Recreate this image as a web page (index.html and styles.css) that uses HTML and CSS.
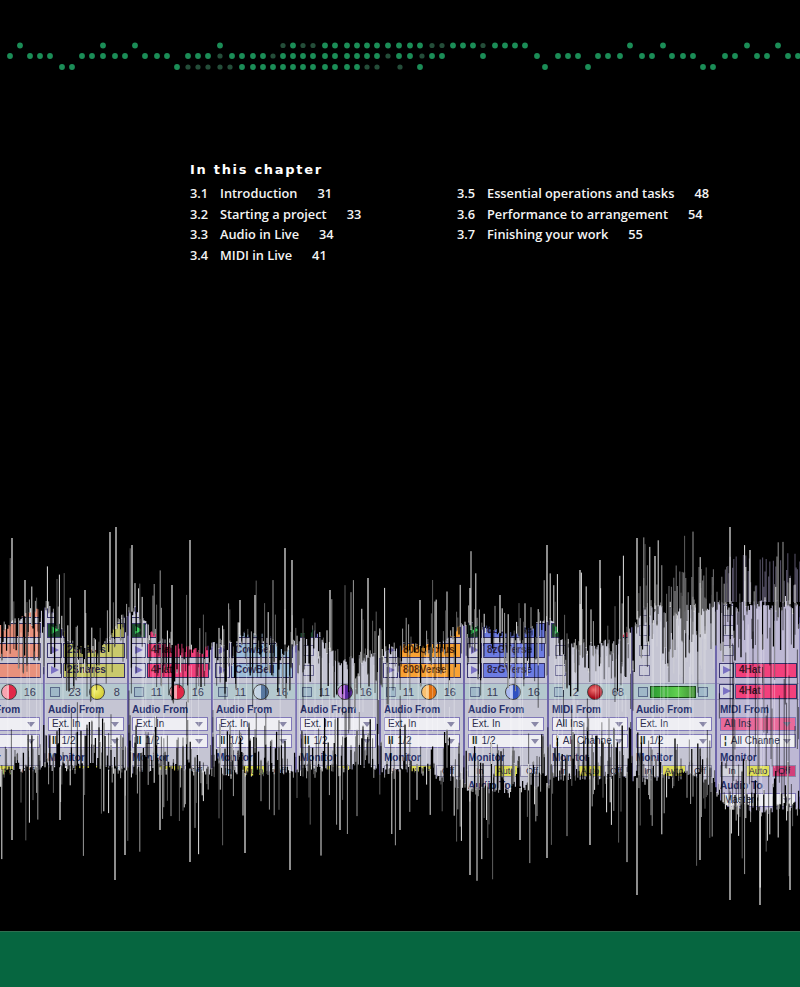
FILE: index.html
```html
<!DOCTYPE html>
<html lang="en">
<head>
<meta charset="utf-8">
<title>In this chapter</title>
<link rel="stylesheet" href="styles.css">
</head>
<body>
<div class="page">
  <header class="dots"><svg id="dots" width="800" height="90" viewBox="0 0 800 90"></svg></header>

  <section class="toc">
    <h2 class="toc-title">In this chapter</h2>
    <div class="toc-cols">
      <ul class="toc-list">
        <li><span class="n">3.1</span><span class="t">Introduction</span><span class="p">31</span></li>
        <li><span class="n">3.2</span><span class="t">Starting a project</span><span class="p">33</span></li>
        <li><span class="n">3.3</span><span class="t">Audio in Live</span><span class="p">34</span></li>
        <li><span class="n">3.4</span><span class="t">MIDI in Live</span><span class="p">41</span></li>
      </ul>
      <ul class="toc-list">
        <li><span class="n">3.5</span><span class="t">Essential operations and tasks</span><span class="p">48</span></li>
        <li><span class="n">3.6</span><span class="t">Performance to arrangement</span><span class="p">54</span></li>
        <li><span class="n">3.7</span><span class="t">Finishing your work</span><span class="p">55</span></li>
      </ul>
    </div>
  </section>

  <figure class="figure">
    <div class="panel">
      <!-- track 0 (partial) -->
      <div class="track">
        <div class="slots">
          <div class="slot"><i class="play"></i><b class="clip salmon"></b></div>
          <div class="slot"><i class="play"></i><b class="clip salmon"></b></div>
          <div class="slot"><i class="play"></i><b class="clip salmon"></b></div>
          <div class="slot"><i class="play"></i><b class="clip salmon"></b></div>
        </div>
        <div class="status"><i class="sq"></i><span>11</span><i class="knob k-red"></i><span>16</span></div>
        <div class="io">
          <div class="lbl">Audio From</div>
          <div class="dd">Ext. In</div>
          <div class="dd"><em>II</em>1/2</div>
          <div class="lbl">Monitor</div>
          <div class="mon"><span>In</span><span class="on">Auto</span><span>Off</span></div>
          <div class="lbl">Audio To</div>
          <div class="dd">Master</div>
        </div>
      </div>
      <!-- track 1 -->
      <div class="track">
        <div class="slots">
          <div class="slot"><i class="play"></i><b class="clip olive">2Snares</b></div>
          <div class="slot"><i class="play on"></i><b class="clip olive">2Snares</b></div>
          <div class="slot"><i class="play"></i><b class="clip olive">2Snares</b></div>
          <div class="slot"><i class="play"></i><b class="clip olive">2Snares</b></div>
        </div>
        <div class="status"><i class="sq"></i><span>23</span><i class="knob k-yellow"></i><span>8</span></div>
        <div class="io">
          <div class="lbl">Audio From</div>
          <div class="dd">Ext. In</div>
          <div class="dd"><em>II</em>1/2</div>
          <div class="lbl">Monitor</div>
          <div class="mon"><span>In</span><span class="on">Auto</span><span>Off</span></div>
          <div class="lbl">Audio To</div>
          <div class="dd">Master</div>
        </div>
      </div>
      <!-- track 2 -->
      <div class="track">
        <div class="slots">
          <div class="slot"><i class="play"></i><b class="clip pink">4Hat</b></div>
          <div class="slot"><i class="play on"></i><b class="clip pink">4Hat</b></div>
          <div class="slot"><i class="play"></i><b class="clip pink">4Hat</b></div>
          <div class="slot"><i class="play"></i><b class="clip pink">4Hat</b></div>
        </div>
        <div class="status"><i class="sq"></i><span>11</span><i class="knob k-red"></i><span>16</span></div>
        <div class="io">
          <div class="lbl">Audio From</div>
          <div class="dd">Ext. In</div>
          <div class="dd"><em>II</em>1/2</div>
          <div class="lbl">Monitor</div>
          <div class="mon"><span>In</span><span class="on">Auto</span><span>Off</span></div>
          <div class="lbl">Audio To</div>
          <div class="dd">Master</div>
        </div>
      </div>
      <!-- track 3 -->
      <div class="track">
        <div class="slots">
          <div class="slot"><i class="play"></i><b class="clip sky">CowBell</b></div>
          <div class="slot"><i class="play"></i><b class="clip sky">CowBell</b></div>
          <div class="slot"><i class="play"></i><b class="clip sky">CowBell</b></div>
          <div class="slot"><i class="play"></i><b class="clip sky">CowBell</b></div>
        </div>
        <div class="status"><i class="sq"></i><span>11</span><i class="knob k-steel"></i><span>16</span></div>
        <div class="io">
          <div class="lbl">Audio From</div>
          <div class="dd">Ext. In</div>
          <div class="dd"><em>II</em>1/2</div>
          <div class="lbl">Monitor</div>
          <div class="mon"><span>In</span><span class="on">Auto</span><span>Off</span></div>
          <div class="lbl">Audio To</div>
          <div class="dd">Master</div>
        </div>
      </div>
      <!-- track 4 -->
      <div class="track">
        <div class="slots">
          <div class="slot"><i class="play"></i><b class="clip violet">Bass</b></div>
          <div class="slot"><i class="play on"></i><b class="clip violet">Bass</b></div>
          <div class="slot empty"><i class="stop"></i></div>
          <div class="slot empty"><i class="stop"></i></div>
        </div>
        <div class="status"><i class="sq"></i><span>11</span><i class="knob k-violet"></i><span>16</span></div>
        <div class="io">
          <div class="lbl">Audio From</div>
          <div class="dd">Ext. In</div>
          <div class="dd"><em>II</em>1/2</div>
          <div class="lbl">Monitor</div>
          <div class="mon"><span>In</span><span class="on">Auto</span><span>Off</span></div>
          <div class="lbl">Audio To</div>
          <div class="dd">Master</div>
        </div>
      </div>
      <!-- track 5 -->
      <div class="track">
        <div class="slots">
          <div class="slot"><i class="play"></i><b class="clip orange">808Chorus</b></div>
          <div class="slot"><i class="play"></i><b class="clip orange">808Chorus</b></div>
          <div class="slot"><i class="play"></i><b class="clip orange">808Chorus</b></div>
          <div class="slot"><i class="play"></i><b class="clip orange">808Verse</b></div>
        </div>
        <div class="status"><i class="sq"></i><span>11</span><i class="knob k-orange"></i><span>16</span></div>
        <div class="io">
          <div class="lbl">Audio From</div>
          <div class="dd">Ext. In</div>
          <div class="dd"><em>II</em>1/2</div>
          <div class="lbl">Monitor</div>
          <div class="mon"><span>In</span><span class="on">Auto</span><span>Off</span></div>
          <div class="lbl">Audio To</div>
          <div class="dd">Master</div>
        </div>
      </div>
      <!-- track 6 -->
      <div class="track">
        <div class="slots">
          <div class="slot"><i class="play"></i><b class="clip blue">8zGVerse</b></div>
          <div class="slot"><i class="play on"></i><b class="clip blue">8zGVerse</b></div>
          <div class="slot"><i class="play"></i><b class="clip blue">8zGVerse</b></div>
          <div class="slot"><i class="play"></i><b class="clip blue">8zGVerse</b></div>
        </div>
        <div class="status"><i class="sq"></i><span>11</span><i class="knob k-blue"></i><span>16</span></div>
        <div class="io">
          <div class="lbl">Audio From</div>
          <div class="dd">Ext. In</div>
          <div class="dd"><em>II</em>1/2</div>
          <div class="lbl">Monitor</div>
          <div class="mon"><span>In</span><span class="on">Auto</span><span>Off</span></div>
          <div class="lbl">Audio To</div>
          <div class="dd">Master</div>
        </div>
      </div>
      <!-- track 7 (MIDI) -->
      <div class="track">
        <div class="slots">
          <div class="slot empty"><i class="stop"></i></div>
          <div class="slot"><i class="play on"></i><b class="clip red">Synth</b></div>
          <div class="slot empty"><i class="stop"></i></div>
          <div class="slot empty"><i class="stop"></i></div>
        </div>
        <div class="status"><i class="sq"></i><span>2</span><i class="knob k-ball"></i><span>68</span></div>
        <div class="io">
          <div class="lbl">MIDI From</div>
          <div class="dd">All Ins</div>
          <div class="dd"><em>¦</em>All Channe</div>
          <div class="lbl">Monitor</div>
          <div class="mon"><span>In</span><span class="on">Auto</span><span>Off</span></div>
          <div class="lbl">MIDI To</div>
          <div class="dd">No Output</div>
        </div>
      </div>
      <!-- track 8 -->
      <div class="track">
        <div class="slots">
          <div class="slot empty"><i class="stop"></i></div>
          <div class="slot empty"><i class="stop"></i></div>
          <div class="slot empty"><i class="stop"></i></div>
          <div class="slot empty"><i class="stop"></i></div>
        </div>
        <div class="status"><i class="sq"></i><i class="meter"></i><i class="sq"></i></div>
        <div class="io">
          <div class="lbl">Audio From</div>
          <div class="dd">Ext. In</div>
          <div class="dd"><em>II</em>1/2</div>
          <div class="lbl">Monitor</div>
          <div class="mon"><span>In</span><span class="on">Auto</span><span>Off</span></div>
          <div class="lbl">Audio To</div>
          <div class="dd">Master</div>
        </div>
      </div>
      <!-- track 9 (partial) -->
      <div class="track ghost">
        <div class="slots">
          <div class="slot empty"><i class="stop"></i></div>
          <div class="slot empty"><i class="stop"></i></div>
          <div class="slot empty"><i class="stop"></i></div>
          <div class="slot"><i class="play"></i><b class="clip pink">4Hat</b></div>
        </div>
        <div class="status pinkrow"><i class="play"></i><b class="clip pink">4Hat</b></div>
        <div class="io">
          <div class="lbl">MIDI From</div>
          <div class="dd pinkdd">All Ins</div>
          <div class="dd"><em>¦</em>All Channe</div>
          <div class="lbl">Monitor</div>
          <div class="mon"><span>In</span><span class="on">Auto</span><span class="pk">Off</span></div>
          <div class="lbl">Audio To</div>
          <div class="dd">Master</div>
        </div>
      </div>
    </div>
    <svg id="wave" class="wave" width="800" height="411" viewBox="0 0 800 411"></svg>
  </figure>

  <footer class="band"></footer>
</div>
<script src="script.js"></script>
</body>
</html>
```

FILE: styles.css
```css
* { box-sizing: border-box; margin: 0; padding: 0; }
html, body { background: #000; }
body { width: 800px; height: 987px; overflow: hidden; }

.page { width: 800px; height: 987px; display: flex; flex-direction: column; background: #000; }

.dots { height: 90px; flex: none; }
.dots svg { display: block; }

/* table of contents */
.toc { height: 430px; flex: none; padding: 72px 0 0 190px; color: #fff; }
.toc-title { font: 700 13px/16px "DejaVu Sans", sans-serif; letter-spacing: 1.7px; margin-bottom: 5px; }
.toc-cols { display: grid; grid-template-columns: 267px auto; }
.toc-list { list-style: none; font: 600 12.8px/20.7px "Open Sans", Lato, sans-serif; color: #f4f4f4; }
.toc-list .n { display: inline-block; width: 30px; }
.toc-list .p { margin-left: 20px; }

/* illustration */
.figure { position: relative; height: 411px; flex: none; overflow: hidden; margin: 0; background: #000; }
.panel { display: flex; width: 840px; height: 215px; margin: 80px 0 0 -39px; background: #c5c5d3;
  font-family: "Liberation Sans", Arial, sans-serif; color: #2a2a4a; }
.track { width: 84px; flex: none; display: flex; flex-direction: column; border-right: 2px solid #6e66aa; }
.track.ghost { background: #bdb8d4; }

.slots { padding: 3px 2px 0 2px; }
.slot { display: flex; height: 15px; margin-bottom: 5px; }
.play { width: 15px; height: 15px; flex: none; border: 1px solid #3a3670; background: #cfcfe0; position: relative; }
.play::before { content: ""; position: absolute; left: 3px; top: 2px; border-left: 8px solid #7b72c4; border-top: 4.5px solid transparent; border-bottom: 4.5px solid transparent; }
.play.on { background: #1f4a32; }
.play.on::before { border-left-color: #3ed060; }
.clip { flex: 1; margin-left: 1px; border: 1.5px solid #34306a; font: 700 10px/12px "Liberation Sans", Arial, sans-serif; padding-left: 3px; color: #2e2850; white-space: nowrap; overflow: hidden; }
.salmon { background: #e8917c; }
.olive { background: #c9c96c; }
.pink { background: #f2407c; color: #3a1024; }
.sky { background: #9dbcd8; }
.violet { background: #7a78d8; }
.orange { background: #f8a234; color: #5a2a08; }
.blue { background: #6c7ce2; }
.red { background: #e8405c; }
.slot.empty { align-items: center; }
.stop { width: 11px; height: 11px; margin-left: 4px; border: 1px solid #6c6a94; background: #c9c9d8; }

.status { height: 17px; display: flex; align-items: center; justify-content: space-between; padding: 0 7px 0 5px;
  background: #b4c8ce; border-top: 1px solid #9a9ab8; border-bottom: 1px solid #9a9ab8; font-size: 11px; color: #3a3a58; }
.sq { width: 10px; height: 10px; border: 1px solid #5a6a8a; background: #9fb8c8; }
.knob { width: 16px; height: 16px; border-radius: 50%; border: 1px solid #444; }
.k-red { background: linear-gradient(90deg, #f7a4b0 50%, #e02848 50%); }
.k-yellow { background: radial-gradient(circle at 40% 40%, #f4f070, #c8c020); }
.k-steel { background: linear-gradient(90deg, #c4d4e4 50%, #5878a0 50%); }
.k-violet { background: linear-gradient(90deg, #c080e0 50%, #5a2aa0 50%); }
.k-orange { background: linear-gradient(90deg, #f8c070 50%, #e07010 50%); }
.k-blue { background: linear-gradient(90deg, #a8b8f0 50%, #3050c0 50%); }
.k-ball { background: radial-gradient(circle at 40% 35%, #f07070, #a00010 70%); }
.meter { width: 46px; height: 12px; background: linear-gradient(90deg, #2a9a30, #60d050 60%, #3c8a30); border: 1px solid #1a4a1a; }
.status.pinkrow { justify-content: flex-start; padding: 0 2px; background: transparent; }
.status.pinkrow .clip { height: 15px; }

.io { padding: 3px 3px 0 3px; }
.lbl { font: 700 10px/13px "Liberation Sans", Arial, sans-serif; color: #27306c; }
.dd { height: 14px; margin: 1px 0 3px; display: flex; align-items: center; padding: 0 4px 0 3px; border: 1px solid #8078b8;
  background: #eeeef3; font: 400 10px/12px "Liberation Sans", Arial, sans-serif; color: #2a2a4a; white-space: nowrap; overflow: hidden; }
.dd::after { content: ""; margin-left: auto; border-top: 5px solid #8a88a8; border-left: 4px solid transparent; border-right: 4px solid transparent; }
.dd em { font-style: normal; font-weight: 700; margin-right: 4px; color: #203020; }
.dd.pinkdd { background: #e86a9a; }
.mon { display: flex; gap: 2px; height: 12px; margin: 1px 0 2px; font: 400 9px/10px "Liberation Sans", Arial, sans-serif; }
.mon span { flex: 1; border: 1px solid #8a88a8; background: #d4d4de; text-align: center; }
.mon span.on { background: #dede58; }
.mon span.pk { background: #d2407a; }

.wave { position: absolute; left: 0; top: 0; width: 800px; height: 411px; }

.band { height: 56px; flex: none; background: #066640; border-top: 1px solid #2f6e50; }
```

FILE: script.js
```js
(function () {
  var NS = 'http://www.w3.org/2000/svg';
  function mk(tag, attrs, parent) {
    var e = document.createElementNS(NS, tag);
    for (var k in attrs) e.setAttribute(k, attrs[k]);
    parent.appendChild(e);
    return e;
  }

  /* ---- dotted header ---- */
  var dots = document.getElementById('dots');
  var rows = [
    { y: 45.5, on: [20,103,135,220,293,325,335,347,357,367,377,388,399,410,420,453,463,473,495,505,515,525,630,663,747,778], off: [283,303,313,432,442,483] },
    { y: 56, on: [10,30,40,50,82,92,103,115,125,145,157,167,188,198,208,232,242,253,263,283,293,303,313,325,335,347,357,367,377,399,410,432,442,483,537,558,568,578,598,608,620,642,652,672,683,693,725,735,757,767,788,798], off: [220,273,388,422] },
    { y: 67, on: [62,72,177,242,253,263,273,283,293,303,313,325,335,347,357,420,545,588,703,713], off: [188,198,208,220,230,367,377,400] }
  ];
  rows.forEach(function (r) {
    r.on.forEach(function (x) { mk('circle', { cx: x, cy: r.y, r: 2.9, fill: '#1b8d57' }, dots); });
    r.off.forEach(function (x) { mk('circle', { cx: x, cy: r.y, r: 2.6, fill: '#244d39' }, dots); });
  });

  /* ---- waveform overlay ---- */
  var w = document.getElementById('wave');
  var OY = 520;
  function mulberry32(a) {
    return function () {
      a |= 0; a = a + 0x6D2B79F5 | 0;
      var t = Math.imul(a ^ a >>> 15, 1 | a);
      t = t + Math.imul(t ^ t >>> 7, 61 | t) ^ t;
      return ((t ^ t >>> 14) >>> 0) / 4294967296;
    };
  }
  var rnd = mulberry32(7);
  function lerp(pts, x) {
    for (var i = 1; i < pts.length; i++) {
      if (x <= pts[i][0]) {
        var a = pts[i - 1], b = pts[i];
        return a[1] + (b[1] - a[1]) * (x - a[0]) / (b[0] - a[0]);
      }
    }
    return pts[pts.length - 1][1];
  }
  var topE = [[0,625],[20,615],[40,604],[50,606],[70,640],[100,648],[125,612],[135,606],[160,638],[200,648],[215,640],[250,630],[290,642],[310,625],[340,658],[380,652],[400,642],[440,642],[465,620],[510,632],[550,617],[570,642],[620,638],[645,605],[700,605],[720,600],[800,600]];
  var botE = [[0,775],[40,772],[100,770],[130,775],[170,770],[210,775],[260,778],[300,772],[340,770],[380,775],[420,772],[460,790],[500,795],[545,788],[560,780],[620,780],[640,782],[700,778],[720,805],[760,815],[800,810]];

  function seg(x, y1, y2) { return 'M' + x.toFixed(1) + ' ' + (y1 - OY).toFixed(1) + 'V' + (y2 - OY).toFixed(1); }

  var blk = '', wh = ['', '', ''], drk = '', lite = '', blob = '', lav = '';
  for (var x = 0.6; x < 800; x += 1.2) {
    var T = lerp(topE, x), B = lerp(botE, x);
    var t = T + (rnd() < 0.6 ? Math.pow(rnd(), 2) * 62 : rnd() * 8);
    var b = B - (rnd() < 0.65 ? Math.pow(rnd(), 1.6) * 55 : rnd() * 8);
    blk += seg(x, 585, t) + seg(x, b, 840);
    if (rnd() < 0.5) {
      var h = Math.pow(rnd(), 2.5) * 75 + 3;
      wh[Math.floor(rnd() * 3)] += seg(x, t - h, t + 1);
    }
    if (rnd() < 0.42) {
      var h2 = Math.pow(rnd(), 2.4) * 90 + 3;
      wh[Math.floor(rnd() * 3)] += seg(x, b - 1, b + h2);
    }
    if (rnd() < 0.3) drk += seg(x, t, t + rnd() * 45);
    if (rnd() < 0.25) drk += seg(x, b - rnd() * 40, b);
    if (rnd() < 0.14) lite += seg(x, t + rnd() * 20, b - rnd() * 20);
    if (x > 640 && x < 722 && rnd() < 0.5) blob += seg(x, 560 + rnd() * 45, 630 + rnd() * 55);
    if (x > 722 && rnd() < 0.55) lav += seg(x, 552 + rnd() * 35, 602);
    if (x > 718 && rnd() < 0.5) drk += seg(x, 600 + rnd() * 200, 605 + rnd() * 210);
  }

  var tall = '';
  [[12,538],[110,532],[116,527],[132,545],[190,540],[285,548],[292,560],[368,578],[470,588],[547,545],[637,538],[655,556],[730,527],[750,550],[790,578],[25,580],[85,590],[172,585],[240,600],[255,595],[330,590],[420,600],[500,595],[580,570],[600,560]]
    .forEach(function (p) { tall += seg(p[0], p[1], lerp(topE, p[0]) + 4); });
  [[12,840],[115,880],[125,855],[190,862],[245,853],[290,870],[340,830],[470,875],[547,858],[637,895],[700,860],[730,900],[760,905],[790,890],[60,820],[160,830],[400,830],[520,840],[590,845]]
    .forEach(function (p) { tall += seg(p[0], lerp(botE, p[0]) - 4, p[1]); });

  mk('path', { d: blk, stroke: '#000', 'stroke-width': 1.3, fill: 'none' }, w);
  mk('path', { d: blob, stroke: '#d6d6da', 'stroke-width': 1.1, 'stroke-opacity': 0.5, fill: 'none' }, w);
  mk('path', { d: lav, stroke: '#a49cc4', 'stroke-width': 1.1, 'stroke-opacity': 0.5, fill: 'none' }, w);
  mk('path', { d: drk, stroke: '#000', 'stroke-width': 1.1, 'stroke-opacity': 0.5, fill: 'none' }, w);
  mk('path', { d: lite, stroke: '#fff', 'stroke-width': 1, 'stroke-opacity': 0.3, fill: 'none' }, w);
  mk('path', { d: wh[0], stroke: '#e4e4e4', 'stroke-width': 1, fill: 'none' }, w);
  mk('path', { d: wh[1], stroke: '#9a9a9a', 'stroke-width': 1, fill: 'none' }, w);
  mk('path', { d: wh[2], stroke: '#5e5e5e', 'stroke-width': 1, fill: 'none' }, w);
  mk('path', { d: tall, stroke: '#ececec', 'stroke-width': 1.2, fill: 'none' }, w);
})();
```
